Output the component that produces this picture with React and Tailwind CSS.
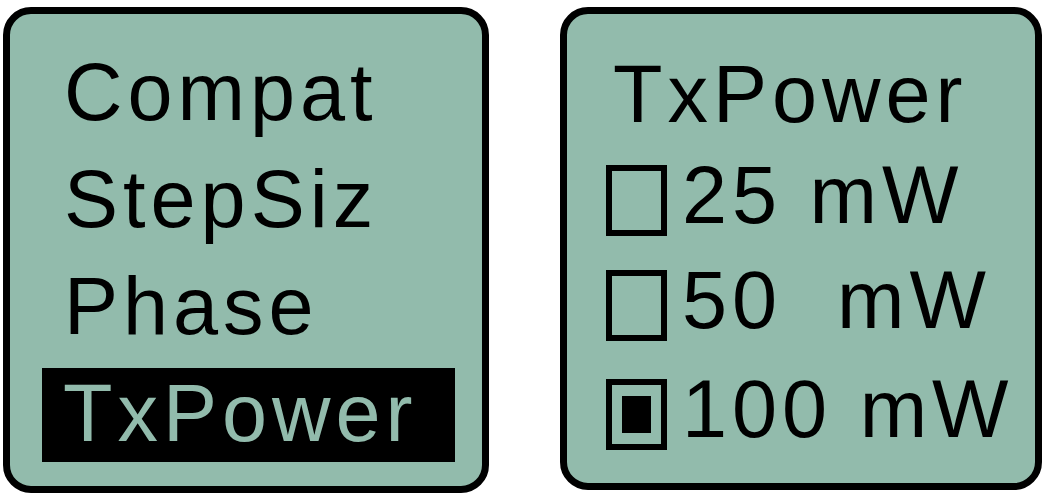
import React from "react";

const FONT = { fontFamily: '"Liberation Sans", Arial, sans-serif' };

function MenuRow({ label }) {
  return (
    <div className="pl-[22px] text-[81px] leading-[91px] tracking-[5px] text-black whitespace-pre">
      {label}
    </div>
  );
}

function CheckBox({ checked }) {
  return (
    <div className="mt-[10px] flex h-[71px] w-[61px] shrink-0 items-center justify-center border-[6px] border-black">
      {checked && <div className="h-[37px] w-[29px] bg-black" />}
    </div>
  );
}

function OptionRow({ label, checked, className }) {
  return (
    <div className={`flex items-center gap-[15px] ${className}`}>
      <CheckBox checked={checked} />
      <span className="text-[81px] leading-[91px] tracking-[5px] text-black whitespace-pre">
        {label}
      </span>
    </div>
  );
}

export default function App() {
  return (
    <div className="h-[497px] w-[1050px] bg-white" style={FONT}>
      <div className="flex gap-[71px] pl-[3px] pt-[7px]">
        {/* settings menu */}
        <div className="flex h-[486px] w-[486px] flex-col gap-[16px] rounded-[28px] border-[7px] border-black bg-[#92bbac] pl-[32px] pr-[27px] pt-[33px]">
          <MenuRow label="Compat" />
          <MenuRow label="StepSiz" />
          <MenuRow label="Phase" />
          <div className="h-[94px] bg-black pl-[21px] text-[81px] leading-[91px] tracking-[5px] text-[#92bbac]">
            TxPower
          </div>
        </div>

        {/* TxPower options */}
        <div className="flex h-[483px] w-[482px] flex-col rounded-[28px] border-[7px] border-black bg-[#92bbac] pl-[39px] pt-[35px]">
          <div className="pl-[7px] text-[81px] leading-[91px] tracking-[5px] text-black">
            TxPower
          </div>
          <OptionRow label="25 mW" className="mt-[10px]" />
          <OptionRow label="50  mW" className="mt-[14px]" />
          <OptionRow label="100 mW" checked className="mt-[18px]" />
        </div>
      </div>
    </div>
  );
}
